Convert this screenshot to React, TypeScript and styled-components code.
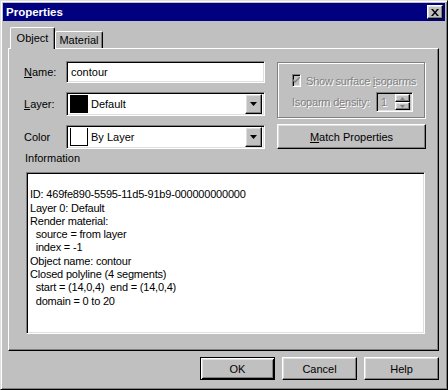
import React from 'react';
import styled, { createGlobalStyle, css } from 'styled-components';

const Global = createGlobalStyle`
  html, body { margin: 0; padding: 0; background: #c0c0c0; }
  body { font-family: "Liberation Sans", Arial, sans-serif; font-size: 11px; color: #000; }
  * { box-sizing: border-box; }
`;

const raised = css`
  border: 1px solid;
  border-color: #fff #000 #000 #fff;
  box-shadow: inset -1px -1px 0 #808080, inset 1px 1px 0 #dfdfdf;
`;

const sunken = css`
  border: 1px solid;
  border-color: #808080 #fff #fff #808080;
  box-shadow: inset 1px 1px 0 #000, inset -1px -1px 0 #dfdfdf;
`;

const Window = styled.div`
  width: 448px;
  height: 390px;
  background: #c0c0c0;
  border: 1px solid;
  border-color: #dfdfdf #000 #000 #dfdfdf;
  box-shadow: inset 1px 1px 0 #fff, inset -1px -1px 0 #808080;
  padding: 2px;
  display: flex;
  flex-direction: column;
`;

const TitleBar = styled.div`
  height: 18px;
  background: #000080;
  display: flex;
  align-items: center;
  justify-content: space-between;
  padding: 0 2px 0 3px;
`;

const Title = styled.span`
  color: #fff;
  font-weight: bold;
  font-size: 11.5px;
`;

const CloseButton = styled.div`
  ${raised};
  width: 16px;
  height: 14px;
  background: #c0c0c0;
  display: flex;
  align-items: center;
  justify-content: center;
`;

const Body = styled.div`
  display: flex;
  flex-direction: column;
  padding: 6px 6px 0 5px;
`;

const TabRow = styled.div`
  display: flex;
  align-items: flex-end;
  height: 21px;
  padding-left: 2px;
`;

const Tab = styled.div<{ $active?: boolean }>`
  position: relative;
  height: ${p => (p.$active ? 22 : 17)}px;
  margin-bottom: ${p => (p.$active ? -1 : 0)}px;
  z-index: ${p => (p.$active ? 1 : 0)};
  width: ${p => (p.$active ? 45 : 48)}px;
  background: #c0c0c0;
  border-top: 1px solid #fff;
  border-left: 1px solid #fff;
  border-right: 1px solid #000;
  border-top-left-radius: 2px;
  border-top-right-radius: 2px;
  box-shadow: inset -1px 0 0 #808080;
  display: flex;
  align-items: center;
  justify-content: center;
  padding-bottom: ${p => (p.$active ? 2 : 0)}px;
`;

const Panel = styled.div`
  height: 303px;
  border: 1px solid;
  border-color: #fff #000 #000 #fff;
  box-shadow: inset -1px -1px 0 #808080;
  padding: 12px 0 0 15px;
  display: flex;
  flex-direction: column;
`;

const TopSection = styled.div`
  display: flex;
  align-items: flex-start;
`;

const FormGrid = styled.div`
  display: grid;
  grid-template-columns: 42px 199px;
  grid-template-rows: 22px 24px 24px;
  row-gap: 9px;
  align-items: center;
`;

const Label = styled.span`
  line-height: 13px;
  white-space: nowrap;
`;

const TextInput = styled.div`
  ${sunken};
  height: 22px;
  background: #fff;
  display: flex;
  align-items: center;
  padding-left: 4px;
`;

const Select = styled.div`
  ${sunken};
  height: 24px;
  background: #fff;
  display: flex;
  align-items: center;
  padding: 2px;
`;

const Swatch = styled.div<{ $color: string }>`
  width: 18px;
  height: 18px;
  margin-left: 1px;
  background: ${p => p.$color};
  border: 1px solid #000;
  border-top: ${p => (p.$color === '#fff' ? 'none' : '1px solid #000')};
`;

const SelectText = styled.span`
  margin-left: 3px;
  flex: 1;
`;

const DropButton = styled.div`
  ${raised};
  width: 17px;
  height: 20px;
  background: #c0c0c0;
  display: flex;
  align-items: center;
  justify-content: center;
`;

const RightColumn = styled.div`
  width: 149px;
  margin-left: 12px;
  margin-top: 1px;
  display: flex;
  flex-direction: column;
`;

const GroupBox = styled.div`
  width: 148px;
  height: 56px;
  border: 1px solid #808080;
  box-shadow: inset 1px 1px 0 #fff, 1px 1px 0 #fff;
  padding: 11px 11px 0 14px;
  display: flex;
  flex-direction: column;
`;

const DisabledText = styled.span`
  color: #808080;
  text-shadow: 1px 1px 0 #fff;
  white-space: nowrap;
  letter-spacing: -0.2px;
`;

const CheckRow = styled.div`
  display: flex;
  align-items: center;
  gap: 5px;
  height: 13px;
`;

const CheckBox = styled.div`
  ${sunken};
  width: 13px;
  height: 13px;
  background: #c0c0c0;
  display: flex;
  align-items: center;
  justify-content: center;
`;

const DensityRow = styled.div`
  display: flex;
  align-items: center;
  justify-content: space-between;
  margin-top: 5px;
  height: 20px;
`;

const SpinBox = styled.div`
  ${sunken};
  width: 37px;
  height: 20px;
  background: #c0c0c0;
  display: flex;
  align-items: center;
  padding: 2px;
`;

const SpinValue = styled(DisabledText)`
  flex: 1;
  padding-left: 2px;
`;

const SpinButtons = styled.div`
  display: flex;
  flex-direction: column;
  width: 15px;
  height: 16px;
`;

const SpinButton = styled.div`
  ${raised};
  flex: 1;
  background: #c0c0c0;
  display: flex;
  align-items: center;
  justify-content: center;
`;

const Button = styled.div<{ $default?: boolean; $width?: number; $height?: number }>`
  width: ${p => p.$width ?? 75}px;
  height: ${p => p.$height ?? 23}px;
  background: #c0c0c0;
  display: flex;
  align-items: center;
  justify-content: center;
  ${p =>
    p.$default
      ? css`
          border: 1px solid #000;
          box-shadow: inset 1px 1px 0 #fff, inset -1px -1px 0 #000, inset 2px 2px 0 #dfdfdf, inset -2px -2px 0 #808080;
        `
      : raised}
`;

const MatchButton = styled(Button)`
  margin-top: 6px;
`;

const InfoLabel = styled.div`
  margin-top: 3px;
  line-height: 13px;
  padding-left: 1px;
`;

const InfoBox = styled.div`
  ${sunken};
  margin-top: 7px;
  margin-left: 2px;
  width: 399px;
  height: 162px;
  background: #fff;
  padding: 2px 0 0 3px;
  white-space: pre;
  line-height: 13.3px;
  letter-spacing: -0.2px;
`;

const ButtonRow = styled.div`
  display: flex;
  justify-content: flex-end;
  gap: 7px;
  margin-top: 6px;
`;

const Arrow = ({ up, color = '#000' }: { up?: boolean; color?: string }) => (
  <svg width="7" height="4" viewBox="0 0 7 4" style={{ display: 'block' }}>
    <path d={up ? 'M3.5 0 L7 4 L0 4 Z' : 'M0 0 L7 0 L3.5 4 Z'} fill={color} />
  </svg>
);

const SmallArrow = ({ up }: { up?: boolean }) => (
  <svg width="5" height="3" viewBox="0 0 5 3" style={{ display: 'block' }}>
    <path d={up ? 'M2.5 0 L5 3 L0 3 Z' : 'M0 0 L5 0 L2.5 3 Z'} fill="#808080" />
  </svg>
);

const infoText = `
ID: 469fe890-5595-11d5-91b9-000000000000
Layer 0: Default
Render material:
  source = from layer
  index = -1
Object name: contour
Closed polyline (4 segments)
  start = (14,0,4)  end = (14,0,4)
  domain = 0 to 20`;

export default function App() {
  return (
    <>
      <Global />
      <Window>
        <TitleBar>
          <Title>Properties</Title>
          <CloseButton>
            <svg width="8" height="7" viewBox="0 0 8 7" style={{ display: 'block' }}>
              <path d="M0 0h2l2 2.5L6 0h2L5 3.5 8 7H6L4 4.5 2 7H0l3-3.5z" fill="#000" />
            </svg>
          </CloseButton>
        </TitleBar>
        <Body>
          <TabRow>
            <Tab $active>Object</Tab>
            <Tab>Material</Tab>
          </TabRow>
          <Panel>
            <TopSection>
              <FormGrid>
                <Label>
                  <u>N</u>ame:
                </Label>
                <TextInput>contour</TextInput>
                <Label>
                  <u>L</u>ayer:
                </Label>
                <Select>
                  <Swatch $color="#000" />
                  <SelectText>Default</SelectText>
                  <DropButton>
                    <Arrow />
                  </DropButton>
                </Select>
                <Label>Color</Label>
                <Select>
                  <Swatch $color="#fff" />
                  <SelectText>By Layer</SelectText>
                  <DropButton>
                    <Arrow />
                  </DropButton>
                </Select>
              </FormGrid>
              <RightColumn>
                <GroupBox>
                  <CheckRow>
                    <CheckBox>
                      <svg width="7" height="7" viewBox="0 0 7 7" style={{ display: 'block' }}>
                        <path d="M0 2v2l2 2 5-5V-1L2 4z" fill="#808080" />
                      </svg>
                    </CheckBox>
                    <DisabledText>
                      Show surface <u>i</u>soparms
                    </DisabledText>
                  </CheckRow>
                  <DensityRow>
                    <DisabledText>
                      Isoparm d<u>e</u>nsity:
                    </DisabledText>
                    <SpinBox>
                      <SpinValue>1</SpinValue>
                      <SpinButtons>
                        <SpinButton>
                          <SmallArrow up />
                        </SpinButton>
                        <SpinButton>
                          <SmallArrow />
                        </SpinButton>
                      </SpinButtons>
                    </SpinBox>
                  </DensityRow>
                </GroupBox>
                <MatchButton $width={149} $height={25}>
                  <span>
                    <u>M</u>atch Properties
                  </span>
                </MatchButton>
              </RightColumn>
            </TopSection>
            <InfoLabel>Information</InfoLabel>
            <InfoBox>{infoText}</InfoBox>
          </Panel>
          <ButtonRow>
            <Button $default>OK</Button>
            <Button>Cancel</Button>
            <Button>Help</Button>
          </ButtonRow>
        </Body>
      </Window>
    </>
  );
}
